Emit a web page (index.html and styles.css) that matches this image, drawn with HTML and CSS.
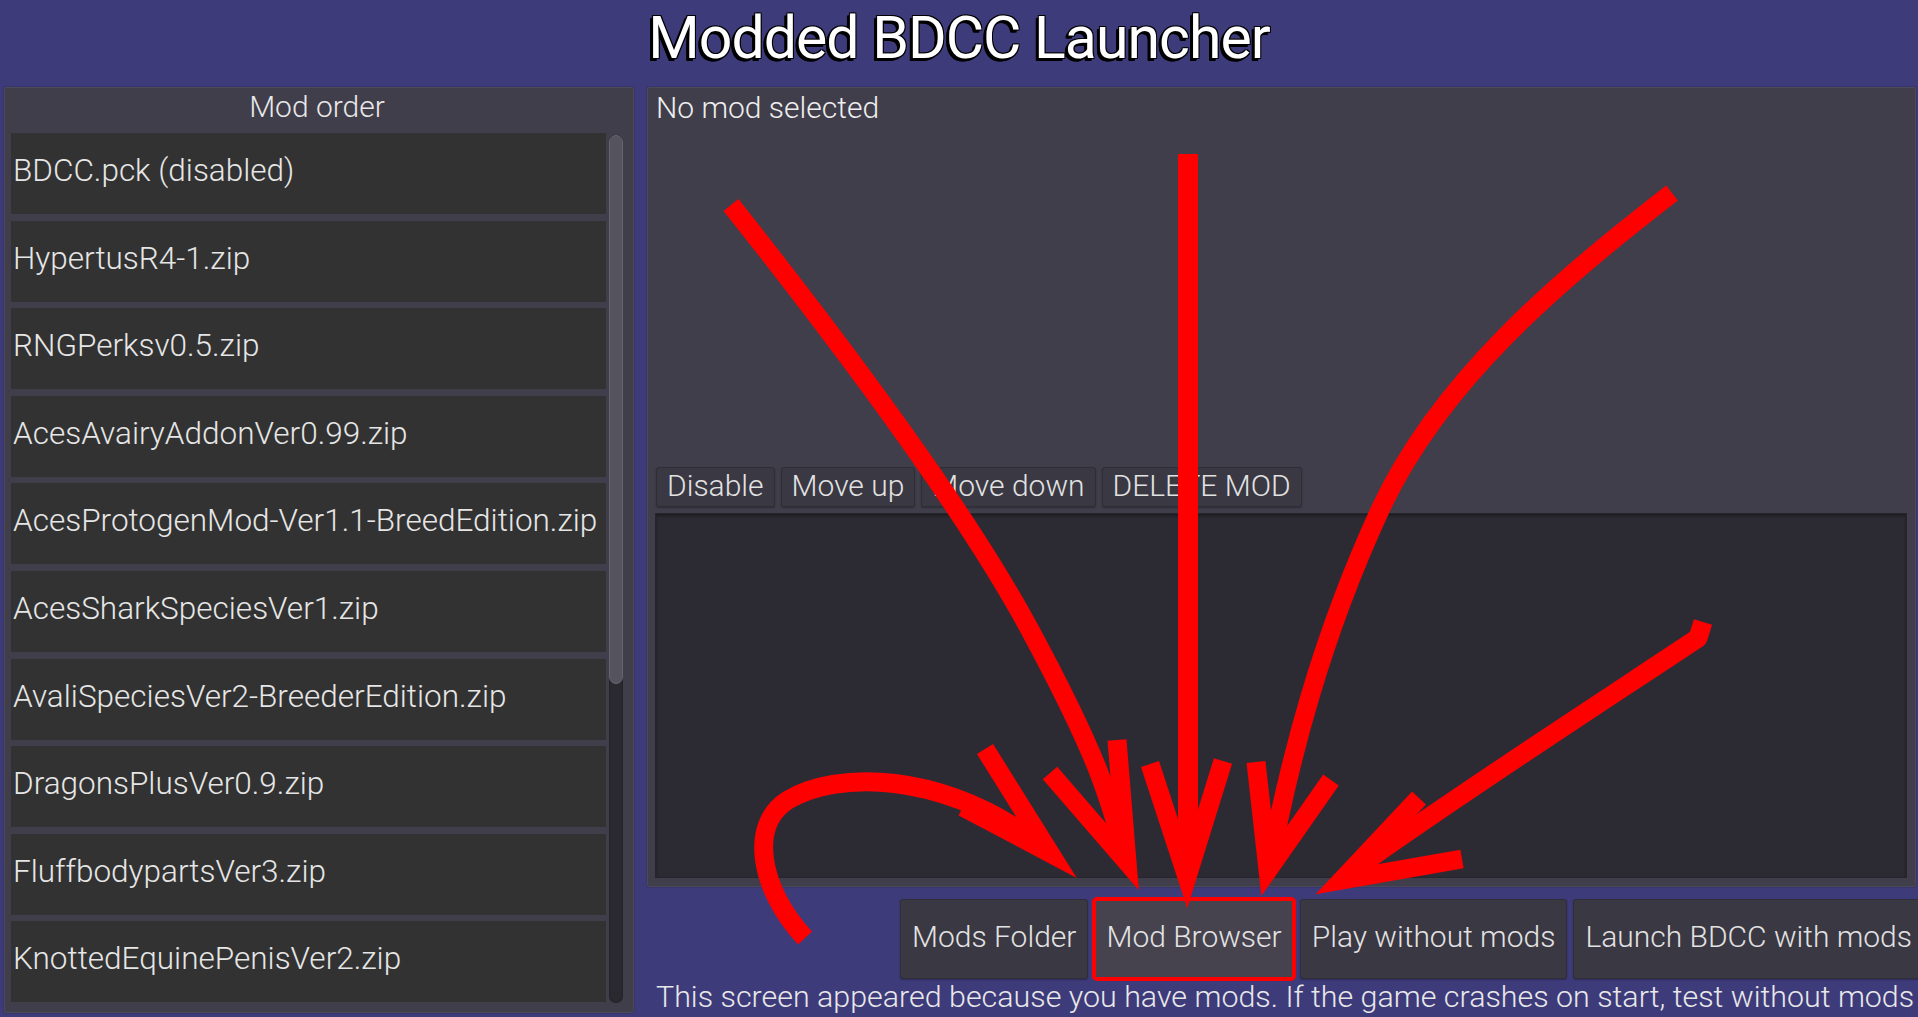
FILE: index.html
```html
<!DOCTYPE html>
<html lang="en">
<head>
<meta charset="utf-8">
<title>Modded BDCC Launcher</title>
<link rel="stylesheet" href="styles.css">
</head>
<body>
<div class="app">
  <header class="title-bar">
    <h1 class="title">Modded BDCC Launcher</h1>
  </header>
  <main class="main">
    <section class="panel mod-order">
      <h2 class="panel-title">Mod order</h2>
      <div class="list-wrap">
        <ul class="mod-list">
          <li class="mod-item">BDCC.pck (disabled)</li>
          <li class="mod-item">HypertusR4-1.zip</li>
          <li class="mod-item">RNGPerksv0.5.zip</li>
          <li class="mod-item">AcesAvairyAddonVer0.99.zip</li>
          <li class="mod-item">AcesProtogenMod-Ver1.1-BreedEdition.zip</li>
          <li class="mod-item">AcesSharkSpeciesVer1.zip</li>
          <li class="mod-item">AvaliSpeciesVer2-BreederEdition.zip</li>
          <li class="mod-item">DragonsPlusVer0.9.zip</li>
          <li class="mod-item">FluffbodypartsVer3.zip</li>
          <li class="mod-item">KnottedEquinePenisVer2.zip</li>
        </ul>
        <div class="scrollbar"><div class="grabber"></div></div>
      </div>
    </section>
    <section class="right-col">
      <div class="panel mod-details">
        <p class="mod-label">No mod selected</p>
        <div class="mod-description"></div>
        <div class="small-buttons">
          <button class="btn small">Disable</button>
          <button class="btn small">Move up</button>
          <button class="btn small">Move down</button>
          <button class="btn small">DELETE MOD</button>
        </div>
        <div class="mod-info"></div>
      </div>
      <div class="action-buttons">
        <button class="btn big">Mods Folder</button>
        <button class="btn big highlighted">Mod Browser</button>
        <button class="btn big">Play without mods</button>
        <button class="btn big">Launch BDCC with mods</button>
      </div>
      <p class="hint">This screen appeared because you have mods. If the game crashes on start, test without mods</p>
    </section>
  </main>
</div>
<svg class="arrows" viewBox="0 0 1918 1017" width="1918" height="1017" aria-hidden="true">
  <g fill="none" stroke="#ff0000" stroke-width="19" stroke-linejoin="round">
    <path d="M731,205 C830,330 960,500 1030,630 S1110,800 1125,855"/>
    <polyline points="1050,773 1127,862 1117,740" stroke-linejoin="miter"/>
    <line x1="1188" y1="154" x2="1188" y2="870" stroke-width="20"/>
    <polyline points="1150,764 1187,877 1223,761" stroke-linejoin="miter"/>
    <path d="M1672,193 C1560,280 1440,380 1380,510 S1290,760 1270,862"/>
    <polyline points="1256,762 1268,870 1331,780" stroke-linejoin="miter"/>
    <path d="M1703,622 L1698,638 C1620,690 1450,800 1348,874"/>
    <polyline points="1419,798 1342,880 1462,859" stroke-linejoin="miter"/>
    <path d="M805,938 C760,890 748,825 788,800 C835,772 940,768 1045,848"/>
    <polyline points="985,749 1050,853 963,807" stroke-linejoin="miter"/>
  </g>
</svg>
</body>
</html>
```
FILE: styles.css
```css
* {
  box-sizing: border-box;
}

html, body {
  margin: 0;
  padding: 0;
}

body {
  width: 1918px;
  height: 1017px;
  overflow: hidden;
  position: relative;
  background: #3e3b7b;
  font-family: Roboto, "Noto Sans", "DejaVu Sans", sans-serif;
  font-weight: 300;
  color: #e6e6e6;
}

.app {
  display: flex;
  flex-direction: column;
  height: 100%;
}

.title-bar {
  height: 87px;
  padding-top: 3px;
  display: flex;
  justify-content: center;
  align-items: flex-start;
}

.title {
  margin: 0;
  font-size: 59px;
  font-weight: 400;
  line-height: 70px;
  letter-spacing: -1px;
  color: #ffffff;
  text-shadow:
    -1px -1px 0 #000, 1px -1px 0 #000, -1px 1px 0 #000, 1px 1px 0 #000,
    -2px 2px 0 #000, -3px 3px 0 #000, -2px 3px 0 #000, -3px 2px 0 #000;
}

.main {
  flex: 1;
  display: grid;
  grid-template-columns: 630px 1fr;
  column-gap: 13px;
  padding-left: 4px;
  min-height: 0;
}

.panel {
  background: #403e4a;
  border: 1px solid #4b4957;
  border-radius: 2px;
  box-shadow: 0 0 2px rgba(0, 0, 0, 0.35);
}

.mod-order {
  height: 926px;
  padding: 1px 10px 9px 6px;
  display: flex;
  flex-direction: column;
}

.panel-title {
  margin: 0 0 8px 0;
  font-size: 30px;
  font-weight: 300;
  line-height: 36px;
  text-align: center;
  color: #e8e8e8;
}

.list-wrap {
  flex: 1;
  display: flex;
  min-height: 0;
}

.mod-list {
  flex: 1;
  list-style: none;
  margin: 0;
  padding: 0;
  display: flex;
  flex-direction: column;
  gap: 6.6px;
  overflow: hidden;
}

.mod-item {
  flex: 0 0 81px;
  height: 81px;
  background: #323232;
  display: flex;
  align-items: center;
  padding: 0 0 5px 2px;
  font-size: 31.5px;
  line-height: 36px;
  color: #e6e6e6;
  white-space: nowrap;
}

.scrollbar {
  width: 14px;
  margin: 2px 0 0 3px;
  background: #2a2930;
  border-radius: 7px;
  box-shadow: inset 0 0 2px rgba(0, 0, 0, 0.5);
}

.grabber {
  height: 549px;
  background: #55535e;
  border: 1px solid #66646f;
  border-radius: 7px;
}

.right-col {
  display: flex;
  flex-direction: column;
  min-width: 0;
}

.mod-details {
  height: 800px;
  margin-right: 2px;
  padding: 2px 8px 8px 8px;
  display: flex;
  flex-direction: column;
}

.mod-label {
  margin: 0;
  font-size: 30px;
  line-height: 36px;
  color: #eeeeee;
}

.mod-description {
  flex: 1;
}

.small-buttons {
  display: flex;
  gap: 6px;
}

.btn {
  font-family: inherit;
  font-weight: 300;
  color: #e2e2e2;
  background: #3a3842;
  border: 1px solid #2f2d36;
  border-radius: 3px;
  box-shadow: 0 1px 2px rgba(0, 0, 0, 0.3);
  white-space: nowrap;
}

.btn.small {
  height: 40px;
  padding: 0 10px 3px 10px;
  font-size: 30px;
  line-height: 34px;
}

.mod-info {
  height: 365px;
  margin-top: 6px;
  margin-left: -1px;
  background: #2c2b33;
  border: 1px solid #26252c;
  box-shadow: inset 0 2px 3px rgba(0, 0, 0, 0.35);
}

.action-buttons {
  margin-top: 12px;
  margin-right: -6px;
  height: 80px;
  display: flex;
  justify-content: flex-end;
  gap: 6px;
}

.btn.big {
  height: 80px;
  padding: 0 11px 4px 11px;
  font-size: 30px;
  line-height: 36px;
}

.btn.highlighted {
  background: #46434f;
  outline: 4px solid #ff0000;
  outline-offset: -2px;
}

.hint {
  margin: 0;
  padding-left: 9px;
  font-size: 30.4px;
  line-height: 36px;
  white-space: nowrap;
  color: #e8e8e8;
}

.arrows {
  position: absolute;
  left: 0;
  top: 0;
  pointer-events: none;
}
```
